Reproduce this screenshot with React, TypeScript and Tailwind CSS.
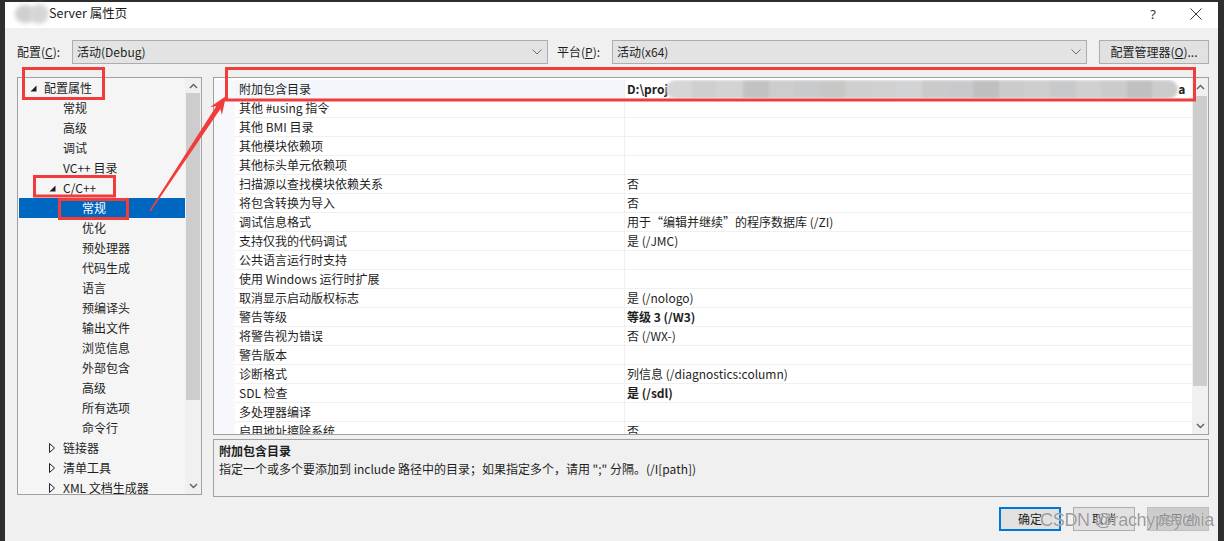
import React from 'react';

const F = "font-['Noto_Sans_CJK_SC','Noto_Sans',sans-serif]";

const ChevUp = () => (
  <svg width="9" height="6" viewBox="0 0 9 6"><path d="M1 5 L4.5 1.5 L8 5" fill="none" stroke="#606060" strokeWidth="1.4" /></svg>
);
const ChevDown = () => (
  <svg width="9" height="6" viewBox="0 0 9 6"><path d="M1 1 L4.5 4.5 L8 1" fill="none" stroke="#606060" strokeWidth="1.4" /></svg>
);
const DropChev = () => (
  <svg width="10" height="6" viewBox="0 0 10 6"><path d="M0.5 0.5 L5 5 L9.5 0.5" fill="none" stroke="#707070" strokeWidth="1" /></svg>
);
const TriOpen = () => (
  <svg width="7" height="7" viewBox="0 0 7 7"><path d="M6.5 0.5 L6.5 6.5 L0.5 6.5 Z" fill="#1e1e1e" /></svg>
);
const TriClosed = () => (
  <svg width="6" height="10" viewBox="0 0 6 10"><path d="M0.5 0.5 L5.5 5 L0.5 9.5 Z" fill="none" stroke="#1e1e1e" strokeWidth="1" /></svg>
);

type TreeItem = { t: string; lv: 0 | 1 | 2; icon?: 'open' | 'closed'; sel?: boolean };
const tree: TreeItem[] = [
  { t: '配置属性', lv: 0, icon: 'open' },
  { t: '常规', lv: 1 },
  { t: '高级', lv: 1 },
  { t: '调试', lv: 1 },
  { t: 'VC++ 目录', lv: 1 },
  { t: 'C/C++', lv: 1, icon: 'open' },
  { t: '常规', lv: 2, sel: true },
  { t: '优化', lv: 2 },
  { t: '预处理器', lv: 2 },
  { t: '代码生成', lv: 2 },
  { t: '语言', lv: 2 },
  { t: '预编译头', lv: 2 },
  { t: '输出文件', lv: 2 },
  { t: '浏览信息', lv: 2 },
  { t: '外部包含', lv: 2 },
  { t: '高级', lv: 2 },
  { t: '所有选项', lv: 2 },
  { t: '命令行', lv: 2 },
  { t: '链接器', lv: 1, icon: 'closed' },
  { t: '清单工具', lv: 1, icon: 'closed' },
  { t: 'XML 文档生成器', lv: 1, icon: 'closed' },
];
const lvPad = ['pl-[11px]', 'pl-[30px]', 'pl-[49px]'];

type Row = { n: string; v?: string; b?: boolean; first?: boolean };
const rows: Row[] = [
  { n: '附加包含目录', first: true, b: true },
  { n: '其他 #using 指令' },
  { n: '其他 BMI 目录' },
  { n: '其他模块依赖项' },
  { n: '其他标头单元依赖项' },
  { n: '扫描源以查找模块依赖关系', v: '否' },
  { n: '将包含转换为导入', v: '否' },
  { n: '调试信息格式', v: '用于“编辑并继续”的程序数据库 (/ZI)' },
  { n: '支持仅我的代码调试', v: '是 (/JMC)' },
  { n: '公共语言运行时支持' },
  { n: '使用 Windows 运行时扩展' },
  { n: '取消显示启动版权标志', v: '是 (/nologo)' },
  { n: '警告等级', v: '等级 3 (/W3)', b: true },
  { n: '将警告视为错误', v: '否 (/WX-)' },
  { n: '警告版本' },
  { n: '诊断格式', v: '列信息 (/diagnostics:column)' },
  { n: 'SDL 检查', v: '是 (/sdl)', b: true },
  { n: '多处理器编译' },
  { n: '启用地址擦除系统', v: '否' },
];

const blobCls = [
  'bg-[#d6d6d6]', 'bg-[#cfcfcf]', 'bg-[#d3d3d3]', 'bg-[#c2c2c2]', 'bg-[#cdcdcd]', 'bg-[#c9cacc]',
  'bg-[#c7c7c5]', 'bg-[#cfcfcf]', 'bg-[#d1d1d1]', 'bg-[#d2d3d5]', 'bg-[#cacaca]', 'bg-[#c9c9cb]',
  'bg-[#c0bfbf]', 'bg-[#cbcbcb]', 'bg-[#cecece]', 'bg-[#c8c9cb]', 'bg-[#d0d0d0]', 'bg-[#cbcbcb]',
  'bg-[#c0c0c0]', 'bg-[#cccccc]',
];

export default function App() {
  return (
    <div className={`relative w-[1224px] h-[541px] overflow-hidden bg-[#2e2e2e] ${F} text-[12px] text-[#1e1e1e]`}>
      <div className="absolute left-[5px] top-[2px] w-[1213px] h-[539px] bg-[#f0f0f0] flex flex-col">
        {/* title bar */}
        <div className="h-[26px] bg-white flex items-start shrink-0 relative">
          <div className="ml-[10px] mt-[2px] w-[34px] h-[20px] relative">
            <div className="absolute left-0 top-[1px] w-[20px] h-[18px] rounded-full bg-[#cfcfcf] blur-[2px]" />
            <div className="absolute left-[14px] top-0 w-[20px] h-[20px] rounded-full bg-[#d6d6d6] blur-[2px]" />
          </div>
          <span className="mt-[3px] leading-[16px] text-[12.5px] text-[#1a1a1a]">Server 属性页</span>
          <div className="ml-auto flex items-start mt-[4px]">
            <span className="text-[13px] leading-[16px] text-[#333] font-['Noto_Sans',sans-serif]">?</span>
            <div className="ml-[34px] mr-[16px] mt-[2px]">
              <svg width="12" height="12" viewBox="0 0 12 12"><path d="M0.5 0.5 L11.5 11.5 M11.5 0.5 L0.5 11.5" stroke="#333" strokeWidth="1" /></svg>
            </div>
          </div>
        </div>

        {/* config row */}
        <div className="mt-[12px] h-[24px] flex items-center pl-[12px] shrink-0">
          <div className="w-[55px]">配置(<span className="underline">C</span>):</div>
          <div className="w-[476px] h-[24px] border border-[#adadad] bg-[#e3e3e3] flex items-center pl-[4px] pr-[5px]">
            <span>活动(Debug)</span>
            <span className="ml-auto"><DropChev /></span>
          </div>
          <div className="ml-[9px] w-[55px]">平台(<span className="underline">P</span>):</div>
          <div className="w-[475px] h-[24px] border border-[#adadad] bg-[#e3e3e3] flex items-center pl-[4px] pr-[5px]">
            <span>活动(x64)</span>
            <span className="ml-auto"><DropChev /></span>
          </div>
          <div className="ml-[12px] w-[110px] h-[24px] border border-[#adadad] bg-[#e1e1e1] flex items-center justify-center">
            配置管理器(<span className="underline">O</span>)...
          </div>
        </div>

        {/* main */}
        <div className="mt-[13px] h-[420px] flex pl-[12px] shrink-0">
          {/* tree */}
          <div className="w-[185px] h-[418px] border border-[#a0a0a0] bg-[#f5f5f5] flex overflow-hidden">
            <div className="flex-1 pl-[1px] overflow-hidden">
              {tree.map((it, i) => (
                <div
                  key={i}
                  className={`h-[20px] flex items-center ${lvPad[it.lv]} ${it.sel ? 'bg-[#0067c0] text-white' : ''}`}
                >
                  <div className="w-[14px] flex items-center">
                    {it.icon === 'open' && <TriOpen />}
                    {it.icon === 'closed' && <TriClosed />}
                  </div>
                  <span className="whitespace-nowrap leading-[20px]">{it.t}</span>
                </div>
              ))}
            </div>
            <div className="w-[16px] bg-[#f0f0f0] flex flex-col items-center shrink-0">
              <div className="h-[15px] w-full flex items-center justify-center"><ChevUp /></div>
              <div className="w-[14px] h-[307px] bg-[#cdcdcd]" />
              <div className="flex-1" />
              <div className="h-[17px] w-full flex items-center justify-center"><ChevDown /></div>
            </div>
          </div>

          {/* right column */}
          <div className="ml-[11px] w-[996px] flex flex-col">
            <div className="h-[358px] border border-[#a0a0a0] bg-white flex overflow-hidden">
              <div className="flex-1 pt-[2px] overflow-hidden">
                {rows.map((r, i) => (
                  <div key={i} className="h-[19px] flex">
                    <div className="w-[21px] bg-[#f6f8fc] shrink-0" />
                    <div className={`w-[390px] shrink-0 border-r border-b border-[#f0f0f0] pl-[4px] leading-[18px] whitespace-nowrap ${r.first ? 'bg-[#f3f6fa]' : ''}`}>
                      {r.n}
                    </div>
                    <div className={`flex-1 border-b border-[#f0f0f0] pl-[2px] leading-[18px] whitespace-nowrap overflow-hidden ${r.b ? 'font-bold' : ''}`}>
                      {r.first ? (
                        <div className="flex items-center h-[18px]">
                          <span className="font-bold">D:\proj</span>
                          <div className="-ml-[2px] w-[512px] h-[19px] flex rounded-full overflow-hidden blur-[1.5px] shrink-0">
                            {blobCls.map((c, j) => (
                              <div key={j} className={`flex-1 ${c}`} />
                            ))}
                          </div>
                          <span className="font-bold">a</span>
                        </div>
                      ) : (
                        r.v ?? ''
                      )}
                    </div>
                  </div>
                ))}
              </div>
              <div className="w-[16px] bg-[#f0f0f0] flex flex-col items-center shrink-0">
                <div className="h-[18px] w-full flex items-center justify-center"><ChevUp /></div>
                <div className="w-[14px] h-[290px] bg-[#cdcdcd]" />
                <div className="flex-1" />
                <div className="h-[17px] w-full flex items-center justify-center"><ChevDown /></div>
              </div>
            </div>
            <div className="mt-[4px] h-[58px] border border-[#a0a0a0] bg-[#f0f0f0] px-[5px] pt-[2px]">
              <div className="font-bold leading-[18px]">附加包含目录</div>
              <div className="leading-[18px] whitespace-nowrap">指定一个或多个要添加到 include 路径中的目录；如果指定多个，请用 ";" 分隔。(/I[path])</div>
            </div>
          </div>
        </div>

        {/* buttons */}
        <div className="mt-[10px] h-[24px] flex justify-end pr-[9px] shrink-0">
          <div className="w-[62px] h-[24px] border-2 border-[#0078d7] bg-[#e1e1e1] flex items-center justify-center">确定</div>
          <div className="ml-[12px] w-[62px] h-[24px] border border-[#adadad] bg-[#e1e1e1] flex items-center justify-center">取消</div>
          <div className="ml-[12px] w-[62px] h-[24px] border border-[#bfbfbf] bg-[#cccccc] text-[#838383] flex items-center justify-center">
            应用(<span className="underline">A</span>)
          </div>
        </div>
      </div>

      {/* watermark */}
      <div className="absolute left-[1040px] top-[508px] text-[18px] leading-[24px] tracking-[-0.3px] text-[#9a9a9a] [text-shadow:0_0_1px_#ffffff] font-['Liberation_Sans',sans-serif] whitespace-nowrap">
        CSDN @rachypsychia
      </div>

      {/* red annotations */}
      <svg className="absolute left-0 top-0 pointer-events-none" width="1224" height="541" viewBox="0 0 1224 541">
        <g fill="none" stroke="#f23c3c" strokeWidth="3">
          <rect x="23.5" y="68.5" width="80" height="30" />
          <rect x="34.5" y="176.5" width="80" height="19.5" />
          <rect x="59.5" y="199.5" width="68" height="19" />
          <rect x="226.5" y="68.5" width="968" height="31.5" />
        </g>
        <polygon
          fill="#f23c3c"
          points="150.6,211.4 220.4,109.1 221.9,114.9 226,96 210.2,107.1 216.2,106.3 149.4,210.6"
        />
      </svg>
    </div>
  );
}
